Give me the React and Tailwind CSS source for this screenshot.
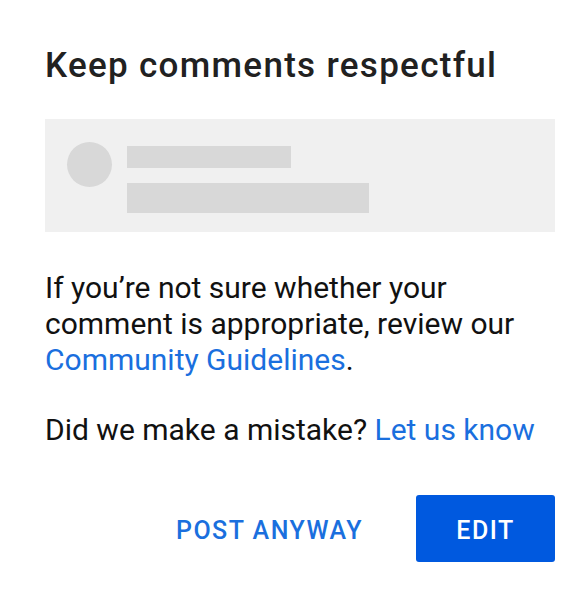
export default function App() {
  return (
    <div className="min-h-screen w-[576px] bg-white pl-[45px] pr-[21px] pt-[46px] font-['Roboto',sans-serif]">
      <h2 className="text-[35px] leading-[40px] font-medium tracking-[1.3px] text-[#212121]">
        Keep comments respectful
      </h2>

      {/* placeholder comment */}
      <div className="mt-[33px] flex h-[113px] items-start gap-[15px] bg-[#f0f0f0] pl-[22px] pt-[23px]">
        <div className="h-[45px] w-[45px] shrink-0 rounded-full bg-[#d8d8d8]" />
        <div className="flex flex-col gap-[15px] pt-[4px]">
          <div className="h-[22px] w-[164px] bg-[#d8d8d8]" />
          <div className="h-[30px] w-[242px] bg-[#d8d8d8]" />
        </div>
      </div>

      <p className="mt-[38px] text-[30px] leading-[36px] text-[#111111]">
        If you’re not sure whether your comment is appropriate, review our{" "}
        <span className="text-[#1a6fde]">Community Guidelines</span>.
      </p>

      <p className="mt-[34px] text-[30px] leading-[36px] text-[#111111]">
        Did we make a mistake? <span className="text-[#1a6fde]">Let us know</span>
      </p>

      <div className="mt-[47px] flex items-center justify-end gap-[53px]">
        <button className="pt-[4px] text-[25px] font-medium tracking-[1.5px] text-[#1a6fde]">
          POST ANYWAY
        </button>
        <button className="flex h-[67px] w-[139px] items-center justify-center rounded-[3px] bg-[#0059df] pt-[4px] text-[25px] font-medium tracking-[1.5px] text-white">
          EDIT
        </button>
      </div>
    </div>
  );
}
